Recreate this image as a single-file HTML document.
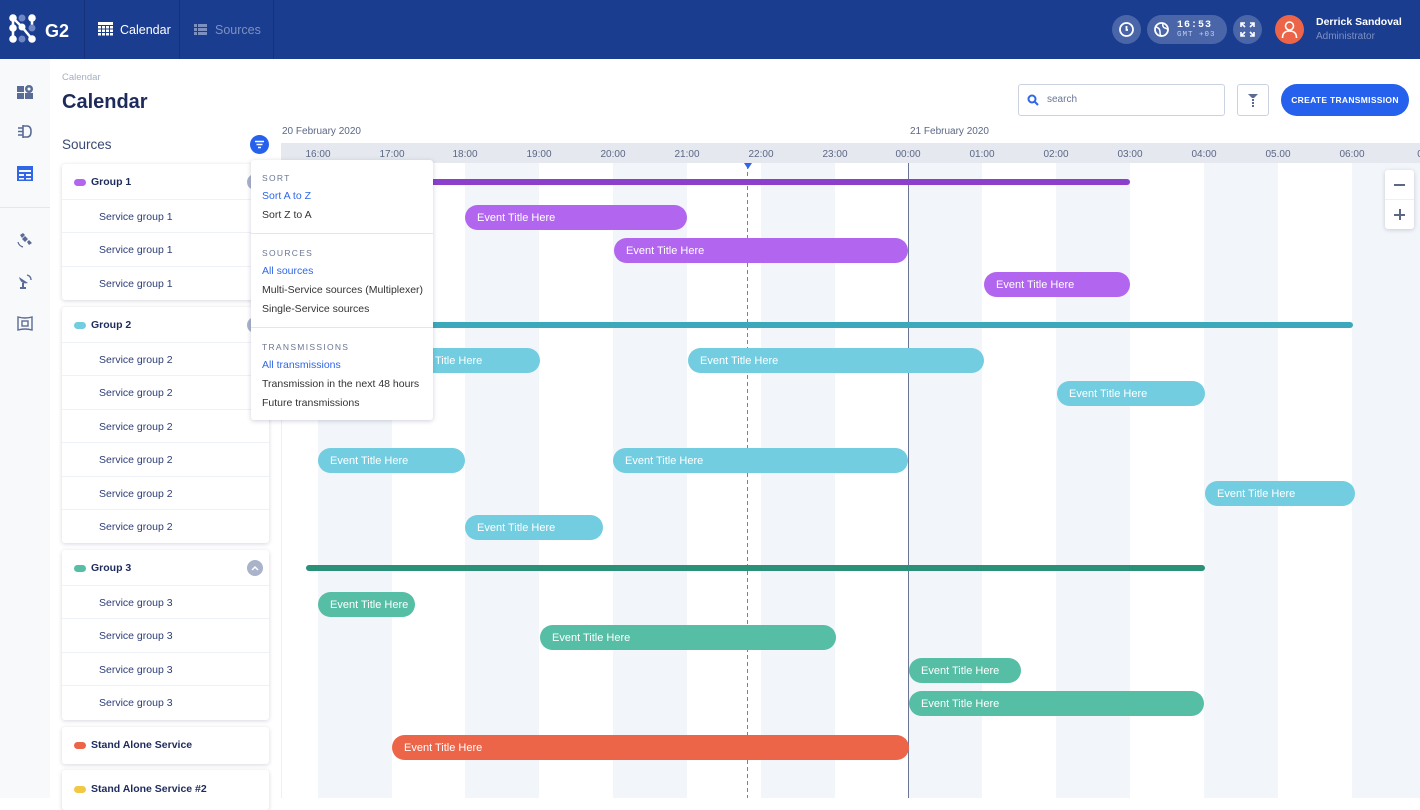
<!DOCTYPE html>
<html><head><meta charset="utf-8">
<style>
*{box-sizing:border-box;margin:0;padding:0}
body{width:1420px;height:798px;overflow:hidden;background:#fff;font-family:"Liberation Sans",sans-serif;position:relative;color:#1d2b5c}
.a{position:absolute}
.top{left:0;top:0;width:1420px;height:59px;background:#1b3d8f}
.ev{position:absolute;height:25px;border-radius:13px;color:#fff;font-size:11px;line-height:26px;padding-left:12px;white-space:nowrap;overflow:hidden}
.bar{position:absolute;height:6px;border-radius:3px}
.stripe{position:absolute;top:163px;height:635px;width:74px;background:#f2f5f9}
.hr{position:absolute;top:149px;font-size:10px;color:#5b6785;width:40px;text-align:center}
.card{position:absolute;left:62px;width:207px;background:#fff;border-radius:3px;box-shadow:0 1px 4px rgba(30,40,80,.18)}
.gh{height:36px;line-height:37px;font-size:10.5px;font-weight:bold;color:#1d2b5c;padding-left:29px;position:relative;border-bottom:1px solid #eef1f5}
.gh i{position:absolute;left:12px;top:15px;width:12px;height:7px;border-radius:4px}
.sr{height:33.4px;line-height:34px;font-size:10.5px;color:#2c3d78;padding-left:37px;border-bottom:1px solid #eef1f5}
.dd{font-size:10.5px;color:#333}
.dd .h{font-size:8.5px;letter-spacing:1.3px;color:#6b7694;}
.blue{color:#2f67e8}
.nav{left:0;top:59px;width:50px;height:739px;background:#f8f9fb}
</style></head><body>
<div class="a top"></div>
<!-- logo -->
<svg class="a" style="left:8px;top:13px" width="68" height="32" viewBox="0 0 68 32">
<path d="M5 5 L14 14 L24 26 M5 5V26 M24 5V15" stroke="#fff" stroke-width="2.5" fill="none"/>
<g fill="#fff"><circle cx="5" cy="5" r="3.8"/><circle cx="5" cy="15" r="3.8"/><circle cx="5" cy="26" r="3.8"/><circle cx="14" cy="14" r="3.5"/><circle cx="24" cy="5" r="3.8"/><circle cx="24" cy="26" r="3.8"/></g>
<circle cx="14" cy="26" r="3.5" fill="#6e86c4"/><circle cx="24" cy="15" r="3.5" fill="#6e86c4"/><circle cx="14" cy="5" r="3.5" fill="#6e86c4"/>
<text x="37" y="24" fill="#fff" font-family="Liberation Sans" font-weight="bold" font-size="18">G2</text></svg>
<div class="a" style="left:84px;top:0;width:1px;height:59px;background:#15327a"></div>
<div class="a" style="left:179px;top:0;width:1px;height:59px;background:#15327a"></div>
<div class="a" style="left:273px;top:0;width:1px;height:59px;background:#15327a"></div>
<svg class="a" style="left:98px;top:22px" width="15" height="14"><rect x="0" y="0" width="15" height="3" fill="#fff"/><g fill="#fff"><rect x="0" y="4" width="3" height="2.5"/><rect x="4" y="4" width="3" height="2.5"/><rect x="8" y="4" width="3" height="2.5"/><rect x="12" y="4" width="3" height="2.5"/><rect x="0" y="7.5" width="3" height="2.5"/><rect x="4" y="7.5" width="3" height="2.5"/><rect x="8" y="7.5" width="3" height="2.5"/><rect x="12" y="7.5" width="3" height="2.5"/><rect x="0" y="11" width="3" height="2.5"/><rect x="4" y="11" width="3" height="2.5"/><rect x="8" y="11" width="3" height="2.5"/><rect x="12" y="11" width="3" height="2.5"/></g></svg>
<div class="a" style="left:120px;top:23px;color:#fff;font-size:12.5px">Calendar</div>
<svg class="a" style="left:194px;top:24px" width="13" height="11"><g fill="#7d90c2"><rect x="0" y="0" width="3" height="3"/><rect x="4" y="0" width="9" height="3"/><rect x="0" y="4" width="3" height="3"/><rect x="4" y="4" width="9" height="3"/><rect x="0" y="8" width="3" height="3"/><rect x="4" y="8" width="9" height="3"/></g></svg>
<div class="a" style="left:215px;top:23px;color:#7d90c2;font-size:12.5px">Sources</div>
<!-- right header -->
<div class="a" style="left:1112px;top:15px;width:29px;height:29px;border-radius:50%;background:#4a66a8"></div>
<svg class="a" style="left:1118px;top:21px" width="17" height="17"><circle cx="8.5" cy="8.5" r="6.5" stroke="#fff" stroke-width="1.8" fill="none"/><path d="M8.5 5V9H10" stroke="#fff" stroke-width="1.8" fill="none"/></svg>
<div class="a" style="left:1147px;top:15px;width:80px;height:29px;border-radius:15px;background:#4a66a8"></div>
<svg class="a" style="left:1153px;top:21px" width="17" height="17"><circle cx="8.5" cy="8.5" r="6.5" stroke="#fff" stroke-width="1.8" fill="none"/><path d="M3 6 Q7 7 7 11 T9 15 M10 2.5 Q9 6 12 7 T15 9" stroke="#fff" stroke-width="1.5" fill="none"/></svg>
<div class="a" style="left:1177px;top:20px;color:#fff;font-size:10px;font-weight:bold;font-family:'Liberation Mono',monospace;letter-spacing:1px">16:53</div>
<div class="a" style="left:1177px;top:31px;color:#c6d0ea;font-size:7.5px;font-family:'Liberation Mono',monospace;letter-spacing:1px">GMT +03</div>
<div class="a" style="left:1233px;top:15px;width:29px;height:29px;border-radius:50%;background:#4a66a8"></div>
<svg class="a" style="left:1239px;top:21px" width="17" height="17" stroke="#fff" stroke-width="1.6" fill="none"><path d="M2 6V2H6M2 2L6 6M11 2H15V6M15 2L11 6M2 11V15H6M2 15L6 11M15 11V15H11M15 15L11 11"/></svg>
<div class="a" style="left:1275px;top:15px;width:29px;height:29px;border-radius:50%;background:#ec6549"></div>
<svg class="a" style="left:1281px;top:20px" width="17" height="19" stroke="#fff" stroke-width="1.6" fill="none"><circle cx="8.5" cy="6" r="4"/><path d="M1.5 18Q1.5 11 8.5 11T15.5 18"/></svg>
<div class="a" style="left:1316px;top:16px;color:#fff;font-size:10.5px;font-weight:bold">Derrick Sandoval</div>
<div class="a" style="left:1316px;top:31px;color:#7d90c2;font-size:10px">Administrator</div>
<!-- left nav -->
<div class="a nav"></div>
<div class="a" style="left:0;top:207px;width:50px;height:1px;background:#e3e6ec"></div>
<svg class="a" style="left:17px;top:84px" width="17" height="16"><rect x="0" y="2" width="7" height="6" fill="#5a6b96"/><rect x="0" y="9" width="7" height="6" fill="#5a6b96"/><rect x="8" y="9" width="8" height="6" fill="#5a6b96"/><circle cx="12" cy="5" r="4" fill="#5a6b96"/><circle cx="12" cy="5" r="1.5" fill="#f8f9fb"/></svg>
<svg class="a" style="left:17px;top:124px" width="16" height="15" stroke="#5a6b96" stroke-width="1.6" fill="none"><path d="M6 1V14M6 2H10Q14 2 14 7.5T10 13H6M1 4H6M1 7.5H6M1 11H6"/></svg>
<svg class="a" style="left:17px;top:166px" width="16" height="15"><rect x="0" y="0" width="16" height="15" fill="#2f67e8"/><g fill="#f8f9fb"><rect x="2" y="4" width="12" height="2"/><rect x="2" y="8" width="5" height="2"/><rect x="9" y="8" width="5" height="2"/><rect x="2" y="12" width="5" height="1.5"/><rect x="9" y="12" width="5" height="1.5"/></g></svg>
<svg class="a" style="left:17px;top:232px" width="16" height="16" fill="#5a6b96"><path d="M3 3L6 1L8 3L5 6Z M10 10L12 8L15 11L12 13Z M5 7L8 4L11 7L8 10Z"/><path d="M1 10Q2 14 6 15" stroke="#5a6b96" fill="none" stroke-width="1.2"/></svg>
<svg class="a" style="left:17px;top:273px" width="16" height="17" fill="#5a6b96"><path d="M2 4Q4 12 11 10Z"/><rect x="5" y="10" width="2" height="4"/><rect x="3" y="14" width="6" height="2"/><path d="M10 2Q14 3 14 7" stroke="#5a6b96" fill="none" stroke-width="1.4"/></svg>
<svg class="a" style="left:17px;top:316px" width="16" height="15" stroke="#5a6b96" fill="none" stroke-width="1.4"><path d="M1 1Q8 3 15 1V14Q8 12 1 14Z"/><rect x="5" y="5" width="6" height="5"/></svg>
<!-- titles -->
<div class="a" style="left:62px;top:72px;font-size:9.5px;color:#a6aec2">Calendar</div>
<div class="a" style="left:62px;top:91px;font-size:20px;font-weight:bold;color:#1d2b5c">Calendar</div>
<div class="a" style="left:62px;top:137px;font-size:13.5px;color:#3b4a72">Sources</div>
<div class="a" style="left:1018px;top:84px;width:207px;height:32px;border:1px solid #cbd3e0;border-radius:3px"></div>
<svg class="a" style="left:1027px;top:94px" width="12" height="12" stroke="#2f67e8" stroke-width="2" fill="none"><circle cx="5" cy="5" r="3.5"/><path d="M7.5 7.5L11 11"/></svg>
<div class="a" style="left:1047px;top:94px;font-size:10px;color:#6b7694">search</div>
<div class="a" style="left:1237px;top:84px;width:32px;height:32px;border:1px solid #cbd3e0;border-radius:3px"></div>
<svg class="a" style="left:1247px;top:93px" width="12" height="15"><path d="M1 1H11L7 5H5Z" fill="#5a6b96"/><rect x="5" y="6" width="2" height="2" fill="#5a6b96"/><rect x="5" y="9" width="2" height="2" fill="#5a6b96"/><rect x="5" y="12" width="2" height="2" fill="#5a6b96"/></svg>
<div class="a" style="left:1281px;top:84px;width:128px;height:32px;border-radius:16px;background:#2561ec;color:#fff;font-size:8.5px;font-weight:bold;text-align:center;line-height:32px;letter-spacing:.3px">CREATE TRANSMISSION</div>
<!-- timeline -->
<div class="a" style="left:282px;top:126px;font-size:10px;color:#5b6785">20 February 2020</div>
<div class="a" style="left:910px;top:126px;font-size:10px;color:#5b6785">21 February 2020</div>
<div class="a" style="left:281px;top:143px;width:1139px;height:20px;background:#e5e8ee"></div>
<div class="a" style="left:281px;top:163px;width:1px;height:635px;background:#eef0f4"></div>
<div class="stripe" style="left:318px"></div><div class="stripe" style="left:465px"></div><div class="stripe" style="left:613px"></div><div class="stripe" style="left:761px"></div><div class="stripe" style="left:908px"></div><div class="stripe" style="left:1056px"></div><div class="stripe" style="left:1204px"></div><div class="stripe" style="left:1352px;width:68px"></div>
<div class="hr" style="left:298px">16:00</div><div class="hr" style="left:372px">17:00</div><div class="hr" style="left:445px">18:00</div><div class="hr" style="left:519px">19:00</div><div class="hr" style="left:593px">20:00</div><div class="hr" style="left:667px">21:00</div><div class="hr" style="left:741px">22:00</div><div class="hr" style="left:815px">23:00</div><div class="hr" style="left:888px">00:00</div><div class="hr" style="left:962px">01:00</div><div class="hr" style="left:1036px">02:00</div><div class="hr" style="left:1110px">03:00</div><div class="hr" style="left:1184px">04:00</div><div class="hr" style="left:1258px">05.00</div><div class="hr" style="left:1332px">06:00</div><div class="hr" style="left:1400px">0</div>
<div class="a" style="left:908px;top:163px;width:1px;height:635px;background:#6b7694"></div>
<div class="a" style="left:747px;top:165px;width:1px;height:633px;background:repeating-linear-gradient(to bottom,#4d86f0 0 4px,transparent 4px 7px)"></div>
<div class="a" style="left:744px;top:163px;width:0;height:0;border-left:4px solid transparent;border-right:4px solid transparent;border-top:6px solid #2f67e8"></div>
<!-- bars -->
<div class="bar" style="left:318px;top:179px;width:812px;background:#8b3fca"></div>
<div class="ev" style="left:465px;top:205px;width:222px;background:#b266ef">Event Title Here</div>
<div class="ev" style="left:614px;top:238px;width:294px;background:#b266ef">Event Title Here</div>
<div class="ev" style="left:984px;top:272px;width:146px;background:#b266ef">Event Title Here</div>
<div class="bar" style="left:318px;top:322px;width:1035px;background:#3ca8bb"></div>
<div class="ev" style="left:392px;top:348px;width:148px;background:#72cde0">Event Title Here</div>
<div class="ev" style="left:688px;top:348px;width:296px;background:#72cde0">Event Title Here</div>
<div class="ev" style="left:1057px;top:381px;width:148px;background:#72cde0">Event Title Here</div>
<div class="ev" style="left:318px;top:448px;width:147px;background:#72cde0">Event Title Here</div>
<div class="ev" style="left:613px;top:448px;width:295px;background:#72cde0">Event Title Here</div>
<div class="ev" style="left:1205px;top:481px;width:150px;background:#72cde0">Event Title Here</div>
<div class="ev" style="left:465px;top:515px;width:138px;background:#72cde0">Event Title Here</div>
<div class="bar" style="left:306px;top:565px;width:899px;background:#2a9178"></div>
<div class="ev" style="left:318px;top:592px;width:97px;background:#56bea5">Event Title Here</div>
<div class="ev" style="left:540px;top:625px;width:296px;background:#56bea5">Event Title Here</div>
<div class="ev" style="left:909px;top:658px;width:112px;background:#56bea5">Event Title Here</div>
<div class="ev" style="left:909px;top:691px;width:295px;background:#56bea5">Event Title Here</div>
<div class="ev" style="left:392px;top:735px;width:517px;background:#ec6549">Event Title Here</div>
<!-- zoom ctrl -->
<div class="a" style="left:1385px;top:170px;width:29px;height:59px;background:#fff;border-radius:3px;box-shadow:0 1px 4px rgba(30,40,80,.2)"></div>
<div class="a" style="left:1385px;top:199px;width:29px;height:1px;background:#eef0f4"></div>
<div class="a" style="left:1394px;top:184px;width:11px;height:1.5px;background:#5b6785"></div>
<div class="a" style="left:1394px;top:214px;width:11px;height:1.5px;background:#5b6785"></div>
<div class="a" style="left:1399px;top:209px;width:1.5px;height:11px;background:#5b6785"></div>
<!-- sidebar cards -->
<div class="card" style="top:164px"><div class="gh"><i style="background:#b266ef"></i>Group 1</div><div class="sr">Service group 1</div><div class="sr">Service group 1</div><div class="sr" style="border:0">Service group 1</div></div>
<div class="card" style="top:307px"><div class="gh"><i style="background:#72cde0"></i>Group 2</div><div class="sr">Service group 2</div><div class="sr">Service group 2</div><div class="sr">Service group 2</div><div class="sr">Service group 2</div><div class="sr">Service group 2</div><div class="sr" style="border:0">Service group 2</div></div>
<div class="card" style="top:550px"><div class="gh"><i style="background:#56bea5"></i>Group 3<span style="position:absolute;left:185px;top:10px;width:16px;height:16px;border-radius:50%;background:#a9b3c9"></span><svg style="position:absolute;left:189px;top:15px" width="8" height="6"><path d="M1 5L4 2L7 5" stroke="#fff" stroke-width="1.5" fill="none"/></svg></div><div class="sr">Service group 3</div><div class="sr">Service group 3</div><div class="sr">Service group 3</div><div class="sr" style="border:0">Service group 3</div></div>
<div class="card" style="top:727px;height:37px"><div class="gh" style="border:0"><i style="background:#ec6549"></i>Stand Alone Service</div></div>
<div class="card" style="top:770px;height:40px"><div class="gh" style="border:0;line-height:38px"><i style="background:#f2c744;top:16px"></i>Stand Alone Service #2</div></div>
<div class="a" style="left:247px;top:174px;width:16px;height:16px;border-radius:50%;background:#a9b3c9"></div>
<div class="a" style="left:247px;top:317px;width:16px;height:16px;border-radius:50%;background:#a9b3c9"></div>
<!-- dropdown -->
<div class="a" style="left:250px;top:135px;width:19px;height:19px;border-radius:50%;background:#2561ec"></div>
<svg class="a" style="left:254px;top:140px" width="11" height="9" stroke="#fff" stroke-width="1.5"><path d="M1 1.5H10M2.5 4.5H8.5M4 7.5H7"/></svg>
<div class="a dd" style="left:251px;top:160px;width:182px;height:260px;background:#fff;border-radius:3px;box-shadow:0 1px 5px rgba(30,40,80,.22)">
<div class="a h" style="left:11px;top:13px">SORT</div>
<div class="a blue" style="left:11px;top:30px">Sort A to Z</div>
<div class="a" style="left:11px;top:49px">Sort Z to A</div>
<div class="a" style="left:0;top:73px;width:182px;height:1px;background:#e3e6ec"></div>
<div class="a h" style="left:11px;top:88px">SOURCES</div>
<div class="a blue" style="left:11px;top:105px">All sources</div>
<div class="a" style="left:11px;top:124px">Multi-Service sources (Multiplexer)</div>
<div class="a" style="left:11px;top:143px">Single-Service sources</div>
<div class="a" style="left:0;top:167px;width:182px;height:1px;background:#e3e6ec"></div>
<div class="a h" style="left:11px;top:182px">TRANSMISSIONS</div>
<div class="a blue" style="left:11px;top:199px">All transmissions</div>
<div class="a" style="left:11px;top:218px">Transmission in the next 48 hours</div>
<div class="a" style="left:11px;top:237px">Future transmissions</div>
</div>
</body></html>
